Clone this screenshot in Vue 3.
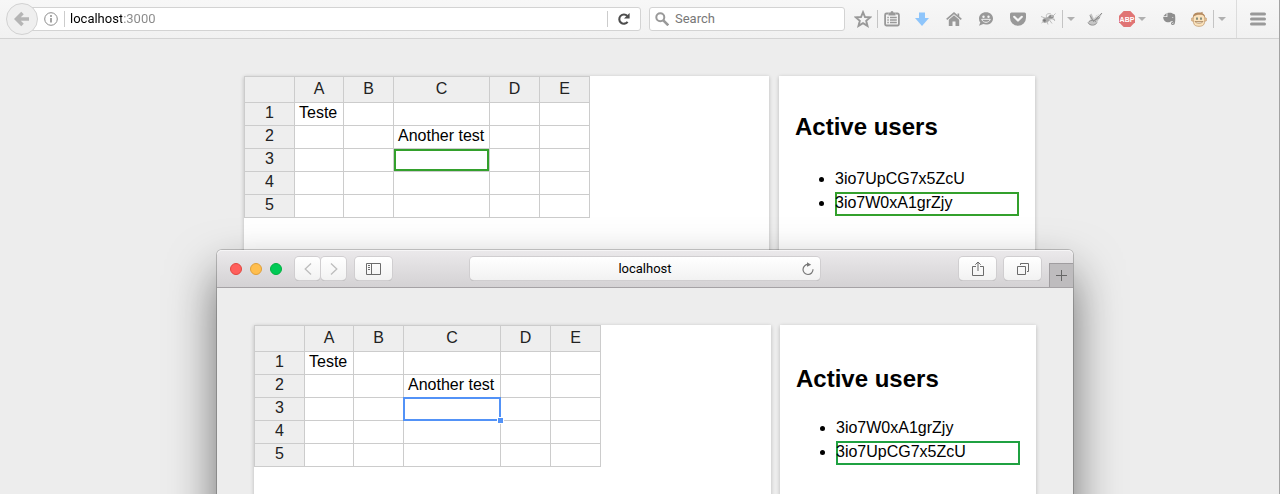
<script setup>
import { ref } from 'vue'

const columns = ['A', 'B', 'C', 'D', 'E']
const rows = [
  ['Teste', '', '', '', ''],
  ['', '', 'Another test', '', ''],
  ['', '', '', '', ''],
  ['', '', '', '', ''],
  ['', '', '', '', '']
]
const isActive = (r, c) => r === 2 && c === 2

const backUsers = ['3io7UpCG7x5ZcU', '3io7W0xA1grZjy']
const frontUsers = ['3io7W0xA1grZjy', '3io7UpCG7x5ZcU']

const address = ref('localhost:3000')
const frontAddress = ref('localhost')
const query = ref('')
</script>

<template>
  <div class="desktop">
    <section class="back-window">
      <header class="fx-bar">
        <button class="fx-back" aria-label="Back">
          <svg width="16" height="16" viewBox="0 0 16 16"><path d="M8.5 2 2.5 8l6 6M3 8h12" fill="none" stroke="#b5b5b5" stroke-width="3.6" /></svg>
        </button>
        <div class="fx-url">
          <svg class="info" width="14" height="14" viewBox="0 0 14 14"><circle cx="7" cy="7" r="6.3" fill="none" stroke="#8c8c8c" /><path d="M7 6v4.6" stroke="#8c8c8c" stroke-width="1.6" /><circle cx="7" cy="3.9" r="1" fill="#8c8c8c" /></svg>
          <span class="url-sep"></span>
          <input v-model="address" class="fx-address" type="text" aria-label="Address">
          <span class="url-sep"></span>
          <button class="reload" aria-label="Reload">
            <svg width="14" height="14" viewBox="0 0 14 14"><path d="M10.6 9.8A4.6 4.6 0 1 1 10.3 4" fill="none" stroke="#4d4d4d" stroke-width="2.1" /><path d="M12.6 1v5.6H7z" fill="#4d4d4d" /></svg>
          </button>
        </div>
        <div class="fx-search">
          <svg width="14" height="14" viewBox="0 0 14 14"><circle cx="5.3" cy="5.3" r="4" fill="none" stroke="#999" stroke-width="2" /><path d="m8.3 8.3 5 5" stroke="#999" stroke-width="2.6" /></svg>
          <input v-model="query" type="text" placeholder="Search" aria-label="Search">
        </div>
        <div class="fx-tools">
          <button class="tool narrow" aria-label="Bookmark">
            <svg width="18" height="18" viewBox="0 0 18 18"><path d="m9 2.2 2 4.8 5.2.4-4 3.4 1.3 5.1L9 13.1l-4.500 2.800 1.300-5.100-4-3.400L7 7z" fill="none" stroke="#999" stroke-width="1.9" /></svg>
          </button>
          <span class="sep"></span>
          <button class="tool narrow" aria-label="Bookmarks list">
            <svg width="16" height="16" viewBox="0 0 16 16"><path d="M4.500 2.500h-2a1.400 1.400 0 0 0-1.400 1.400v9.200a1.400 1.400 0 0 0 1.400 1.400h11a1.400 1.400 0 0 0 1.400-1.400V3.900a1.400 1.400 0 0 0-1.400-1.400h-2" fill="none" stroke="#999" stroke-width="1.800" /><path d="M4.500 1.500h2a1.500 1.500 0 0 1 3 0h2v3h-7z" fill="#999" /><path d="M3.300 6.500h1.500M6 6.500h6.800M3.300 9h1.500M6 9h6.800M3.300 11.500h1.500M6 11.500h6.800" stroke="#999" stroke-width="1.400" /></svg>
          </button>
          <button class="tool" aria-label="Downloads">
            <svg width="16" height="16" viewBox="0 0 16 16"><path d="M5 1.500h6V7h4L8 15 1 7h4z" fill="#8ec5fb" /></svg>
          </button>
          <button class="tool" aria-label="Home">
            <svg width="16" height="16" viewBox="0 0 16 16"><path d="M.7 8.300 8 2l7.300 6.300" fill="none" stroke="#999" stroke-width="1.700" /><path d="M8 4.200 2.800 8.700V15H6.500v-4.500h3V15h3.700V8.700z" fill="#999" /><path d="M11.500 2.500h1.700v3.500l-1.700-1.500z" fill="#999" /></svg>
          </button>
          <button class="tool" aria-label="Chat">
            <svg width="16" height="16" viewBox="0 0 16 16"><path d="M8 1.200c4 0 7 2.700 7 6.200s-3 6.200-7 6.200c-1 0-2-.2-2.800-.5L1 14.800l1.300-3.300A5.900 5.900 0 0 1 1 7.400c0-3.500 3-6.200 7-6.200z" fill="#999" /><circle cx="5.500" cy="5.700" r="1.200" fill="#f3f3f3" /><circle cx="10.500" cy="5.700" r="1.200" fill="#f3f3f3" /><path d="M3.700 8.300c1.300 4 7.300 4 8.600 0z" fill="#999" stroke="#f3f3f3" stroke-width="1" /></svg>
          </button>
          <button class="tool" aria-label="Pocket">
            <svg width="16" height="16" viewBox="0 0 16 16"><path d="M1.500 1.500h13A1.500 1.500 0 0 1 16 3v3.800a8 8 0 0 1-16 0V3a1.500 1.500 0 0 1 1.500-1.500z" fill="#999" /><path d="m4.200 5.800 3.800 3.700 3.800-3.700" fill="none" stroke="#f5f5f5" stroke-width="2.200" stroke-linecap="round" stroke-linejoin="round" /></svg>
          </button>
          <button class="tool narrow" aria-label="Debugger">
            <svg width="16" height="16" viewBox="0 0 16 16"><ellipse cx="6" cy="9" rx="3.800" ry="2.500" transform="rotate(-25 6 9)" fill="#a9a9a9" /><ellipse cx="11" cy="6" rx="2.800" ry="2" transform="rotate(-20 11 6)" fill="#8f8f8f" /><path d="M7 7C5 3 8 2 11 3M8 8c3-1 6 0 7 2M5 7 1 5.500M4 10l-2.500 2M7 10.500l1 3M9.500 9l2.500 3.500M12.500 7.500l2.500 1M13 5l2.500-2.500" fill="none" stroke="#b5b5b5" stroke-width=".9" /><circle cx="4.500" cy="9.500" r="1.300" fill="#777" /><circle cx="12" cy="5" r=".7" fill="#f2f2f2" /></svg>
          </button>
          <span class="sep"></span>
          <button class="tool slim" aria-label="Debugger menu"><span class="caret"></span></button>
          <button class="tool" aria-label="Styles">
            <svg width="16" height="16" viewBox="0 0 16 16"><path d="M.8 11c0 3.800 7.800 4 9.200.5L15.500 2 9 4.500 7 8 4.500 2.500 2.500 4l1.200 5z" fill="#c5c5c5" /><path d="M1 11.500c1.500 3.500 7.500 3.500 9 0M3 4.500l3.500 6L15 2M7 9.500l6-3M2 10.500c2-1.500 5-1.500 7 0" fill="none" stroke="#8f8f8f" stroke-width="1" /><path d="m8 6 5-2.500" stroke="#f0f0f0" /></svg>
          </button>
          <button class="tool with-caret" aria-label="Adblock">
            <svg width="16" height="16" viewBox="0 0 16 16"><path d="M4.700 0h6.600L16 4.700v6.600L11.300 16H4.700L0 11.300V4.700z" fill="#e07474" /><text x="8" y="10.600" text-anchor="middle" font-family="Liberation Sans, sans-serif" font-size="7" font-weight="700" fill="#fff">ABP</text></svg>
            <span class="caret"></span>
          </button>
          <button class="tool" aria-label="Clip page">
            <svg width="14" height="16" viewBox="0 0 14 16"><path d="M4.500 2v3.200H1.300zM5.400 2c3-.8 5 .1 5.600.8 1.500.2 2 .5 2.100 1.700.4 3 .2 8-.8 9-.6.7-3 .8-3.300-.7-.2-1.700 1-2 2-1.800v1c-.8-.1-1 .2-.8.7.4.5 1.200.2 1.200-.5 0-1.700-.7-2-2.700-2-.2 1.700-4.900 1.300-6-.2C1.500 9 1.200 7.300 1.200 6.100h4.200z" fill="#8e8e8e" /><path d="M9.800 6.500c.5-.7 1.500-.6 1.800.2z" fill="#f3f3f3" /></svg>
          </button>
          <button class="tool narrow" aria-label="Scripts">
            <svg width="16" height="16" viewBox="0 0 16 16"><circle cx="1.900" cy="8.500" r="1.700" fill="#e8c79d" stroke="#c49b70" stroke-width=".7" /><circle cx="14.100" cy="8.500" r="1.700" fill="#e8c79d" stroke="#c49b70" stroke-width=".7" /><path d="M3 3.500C6 2 11 2 13 3.800c1.200 2 1.200 8.200-.4 10-2 2-7.200 2-9.200 0C1.800 11.500 1.800 6 3 3.500z" fill="#fbe3bd" stroke="#c29a6d" stroke-width=".8" /><path d="M2 6c0-4 4-5 6.500-4.500C10 1.600 11 .8 12 .7l-.8 1.500c1.500.5 2.800 2 2.800 4l-2-2C9 3.500 5 3.500 2 6z" fill="#b58b61" /><path d="M6 6.500v2.300M10 6.500v2.300" stroke="#576c65" stroke-width="1.400" /><path d="M4 10.500h8c-.8 2.200-7.200 2.200-8 0z" fill="#f8f5e9" stroke="#a78259" stroke-width=".8" /></svg>
          </button>
          <span class="sep"></span>
          <button class="tool slim" aria-label="Scripts menu"><span class="caret"></span></button>
          <span class="sep tall"></span>
          <button class="tool menu" aria-label="Menu">
            <svg width="16" height="14" viewBox="0 0 16 14"><path d="M1.500 2h13M1.500 7h13M1.500 12h13" stroke="#999" stroke-width="3" stroke-linecap="round" /></svg>
          </button>
        </div>
      </header>
      <main class="page">
        <div class="sheet">
          <table>
            <thead>
              <tr><th></th><th v-for="c in columns" :key="c" scope="col">{{ c }}</th></tr>
            </thead>
            <tbody>
              <tr v-for="(row, r) in rows" :key="r">
                <th scope="row">{{ r + 1 }}</th>
                <td v-for="(cell, c) in row" :key="c" :class="{ remote: isActive(r, c) }">{{ cell }}</td>
              </tr>
            </tbody>
          </table>
        </div>
        <aside class="users">
          <h2>Active users</h2>
          <ul>
            <li v-for="(u, i) in backUsers" :key="u" :class="{ marked: i === 1 }">{{ u }}</li>
          </ul>
        </aside>
      </main>
    </section>

    <section class="front-window">
      <header class="sf-bar">
        <div class="sf-group">
          <div class="lights">
            <button class="light red" aria-label="Close"></button>
            <button class="light amber" aria-label="Minimize"></button>
            <button class="light green" aria-label="Zoom"></button>
          </div>
          <div class="history">
            <button class="sf-btn small" aria-label="Back">
              <svg width="8" height="14" viewBox="0 0 8 14"><path d="M7 1.500 1.200 7 7 12.500" fill="none" stroke="#bdbdbd" stroke-width="1.300" /></svg>
            </button>
            <button class="sf-btn small" aria-label="Forward">
              <svg width="8" height="14" viewBox="0 0 8 14"><path d="M1 1.500 6.800 7 1 12.500" fill="none" stroke="#bdbdbd" stroke-width="1.300" /></svg>
            </button>
          </div>
          <button class="sf-btn" aria-label="Sidebar">
            <svg width="16" height="12" viewBox="0 0 16 12"><path d="M.5.5h14v11H.5zM5.500.5v11" fill="none" stroke="#6b6b6b" /><path d="M2 2.500h2M2 4.500h2M2 6.500h2" stroke="#6b6b6b" /></svg>
          </button>
        </div>
        <div class="sf-url">
          <input v-model="frontAddress" type="text" aria-label="Address">
          <button class="sf-reload" aria-label="Reload">
            <svg width="14" height="14" viewBox="0 0 14 14"><path d="M7.500 2.500A5 5 0 1 0 12 7.300" fill="none" stroke="#777" stroke-width="1.200" /><path d="M6 .3v4.500l4.200-2.100z" fill="#777" /></svg>
          </button>
        </div>
        <div class="sf-group end">
          <button class="sf-btn" aria-label="Share">
            <svg width="12" height="16" viewBox="0 0 12 16"><path d="M4 5.500H.5v9h11v-9H8M6 10V1.200M3.300 3.700 6 1l2.700 2.700" fill="none" stroke="#6b6b6b" /></svg>
          </button>
          <button class="sf-btn" aria-label="Tabs">
            <svg width="12" height="12" viewBox="0 0 12 12"><path d="M.5 3.500h8v8h-8zM3.500 2V.5h8v8H10" fill="none" stroke="#6b6b6b" /></svg>
          </button>
          <button class="new-tab" aria-label="New tab">
            <svg width="11" height="11" viewBox="0 0 11 11"><path d="M5.500 0v11M0 5.500h11" stroke="#666" /></svg>
          </button>
        </div>
      </header>
      <main class="page front">
        <div class="sheet">
          <table class="wide">
            <thead>
              <tr><th></th><th v-for="c in columns" :key="c" scope="col">{{ c }}</th></tr>
            </thead>
            <tbody>
              <tr v-for="(row, r) in rows" :key="r">
                <th scope="row">{{ r + 1 }}</th>
                <td v-for="(cell, c) in row" :key="c" :class="{ current: isActive(r, c) }">{{ cell }}<span v-if="isActive(r, c)" class="handle"></span></td>
              </tr>
            </tbody>
          </table>
        </div>
        <aside class="users">
          <h2>Active users</h2>
          <ul>
            <li v-for="(u, i) in frontUsers" :key="u" :class="{ marked: i === 1 }">{{ u }}</li>
          </ul>
        </aside>
      </main>
    </section>
  </div>
</template>

<style>
body { margin: 0; background: #ededed; }
</style>

<style scoped>
* { box-sizing: border-box; }
.desktop {
  position: relative;
  min-height: 100vh;
  overflow: hidden;
  font: 16px/24px "Liberation Sans", Arial, sans-serif;
  color: #000;
}
button { border: 0; padding: 0; margin: 0; background: none; font: inherit; }
input { border: 0; padding: 0; margin: 0; outline: 0; background: none; min-width: 0; font: 13px/16px Roboto, sans-serif; }
svg { display: block; flex: none; }

.back-window {
  display: flex;
  flex-direction: column;
  min-height: 100vh;
  background: #ededed;
  border-right: 1px solid #a3a3a3;
}
.fx-bar {
  display: flex;
  align-items: center;
  height: 39px;
  padding-left: 6px;
  border-bottom: 1px solid #d3d3d3;
  background: linear-gradient(#f7f7f7, #f1f1f1);
}
.fx-back {
  z-index: 1;
  flex: none;
  display: grid;
  place-items: center;
  width: 32px;
  height: 32px;
  margin-right: -12px;
  border: 1px solid #d2d2d2;
  border-radius: 50%;
  background: #efefef;
}
.fx-url, .fx-search {
  display: flex;
  align-items: center;
  height: 24px;
  border: 1px solid #d3d3d3;
  border-radius: 3px;
  background: #fff;
}
.fx-url { flex: 1; padding-left: 17px; }
.fx-search { width: 196px; margin: 0 4px 0 8px; padding: 0 5px; gap: 6px; }
.fx-search input { flex: 1; color: #000; }
.fx-search input::placeholder { color: #777; opacity: 1; }
.url-sep { width: 1px; height: 16px; background: #ccc; }
.info { margin-right: 6px; }
.fx-address {
  flex: 1;
  margin-left: 5px;
  background: linear-gradient(90deg, #000 52px, #888 52px);
  background-clip: text;
  -webkit-background-clip: text;
  color: transparent;
  caret-color: #000;
}
.reload { display: grid; place-items: center; width: 32px; height: 22px; }

.fx-tools { display: flex; align-items: center; height: 38px; }
.tool { display: flex; align-items: center; justify-content: center; width: 32px; height: 32px; }
.tool.narrow { width: 28px; }
.tool.slim { width: 16px; }
.tool.with-caret { width: 42px; gap: 3px; }
.tool.menu { width: 42px; }
.sep { width: 1px; height: 18px; background: #c4c4c4; }
.sep.tall { height: 38px; margin-left: 6px; background: #dcdcdc; }
.caret { border: 4px solid transparent; border-top-color: #b0b0b0; border-bottom: 0; }

.page {
  flex: 1;
  display: grid;
  grid-template-columns: 1fr 256px;
  gap: 10px;
  width: 100%;
  max-width: 791px;
  margin: 37px auto 0;
}
.page.front { gap: 9px; max-width: none; margin: 0; padding: 37px 37px 0; }
.sheet, .users { background: #fff; box-shadow: 0 1px 4px rgba(0, 0, 0, .22); }
.users { padding: 16px; }
h2 { margin: 17px 0 23px; font-size: 24px; line-height: 36px; }
.front h2 { margin: 20px 0; }
ul { margin: 0; padding-left: 40px; }
li { line-height: 22px; padding-bottom: 2px; }
.marked { box-shadow: inset 0 0 0 2px #33a02c; }
.front .marked { box-shadow: inset 0 0 0 2px #1fa141; }

table {
  table-layout: fixed;
  width: 346px;
  border: solid #ccc;
  border-width: 1px 0 0 1px;
  border-collapse: separate;
  border-spacing: 0;
}
table.wide { width: 347px; }
th, td {
  position: relative;
  height: 23px;
  padding: 0 4px;
  border: solid #ccc;
  border-width: 0 1px 1px 0;
  line-height: 20px;
  vertical-align: top;
  white-space: nowrap;
}
th { background: #eee; color: #222; font-weight: 400; text-align: center; }
thead th { width: 50px; height: 26px; line-height: 24px; }
thead th:nth-child(2) { width: 49px; }
thead th:nth-child(4) { width: auto; }
.remote { box-shadow: inset 0 0 0 2px #33a02c; }
.current::before { content: ""; position: absolute; inset: -1px; border: 2px solid #5292f7; }
.handle {
  position: absolute;
  z-index: 1;
  right: -4px;
  bottom: -4px;
  width: 7px;
  height: 7px;
  border: 1px solid #fff;
  background: #5292f7;
}

.front-window {
  position: absolute;
  top: 250px;
  right: 207px;
  bottom: -80px;
  left: 217px;
  display: flex;
  flex-direction: column;
  border-radius: 5px 5px 0 0;
  background: #ededed;
  box-shadow: 0 0 0 1px rgba(0, 0, 0, .2), 0 24px 48px rgba(0, 0, 0, .55);
}
.sf-bar {
  display: grid;
  grid-template-columns: 1fr 350px 1fr;
  align-items: center;
  height: 38px;
  border-bottom: 1px solid #a5a2a5;
  border-radius: 5px 5px 0 0;
  background: linear-gradient(#ebe9eb, #d4d2d4);
  box-shadow: inset 0 1px #f6f5f6;
}
.sf-group { display: flex; align-items: center; padding-left: 13px; }
.lights { display: flex; gap: 8px; margin-right: 13px; }
.light { width: 12px; height: 12px; border: 1px solid #e2463f; border-radius: 50%; background: #ff5f5c; }
.light.amber { border-color: #dfa03a; background: #ffbe4e; }
.light.green { border-color: #00b13f; background: #00ca56; }
.history { display: flex; gap: 1px; margin-right: 9px; }
.sf-btn, .sf-url {
  display: flex;
  align-items: center;
  justify-content: center;
  height: 23px;
  border-radius: 4px;
  background: linear-gradient(#fff, #f2f2f2);
  box-shadow: 0 0 0 1px #d0ced0, 0 1px #aaa8aa;
}
.sf-btn { width: 37px; }
.sf-btn.small { width: 25px; }
.sf-url { gap: 4px; padding: 0 5px 0 23px; }
.sf-url input { flex: 1; text-align: center; color: #000; }
.sf-group.end { align-self: stretch; justify-content: flex-end; padding: 0; gap: 8px; }
.new-tab {
  align-self: flex-end;
  display: grid;
  place-items: center;
  width: 24px;
  height: 24px;
  border: solid #a09da0;
  border-width: 1px 0 0 1px;
  background: #bebcbe;
}
</style>
